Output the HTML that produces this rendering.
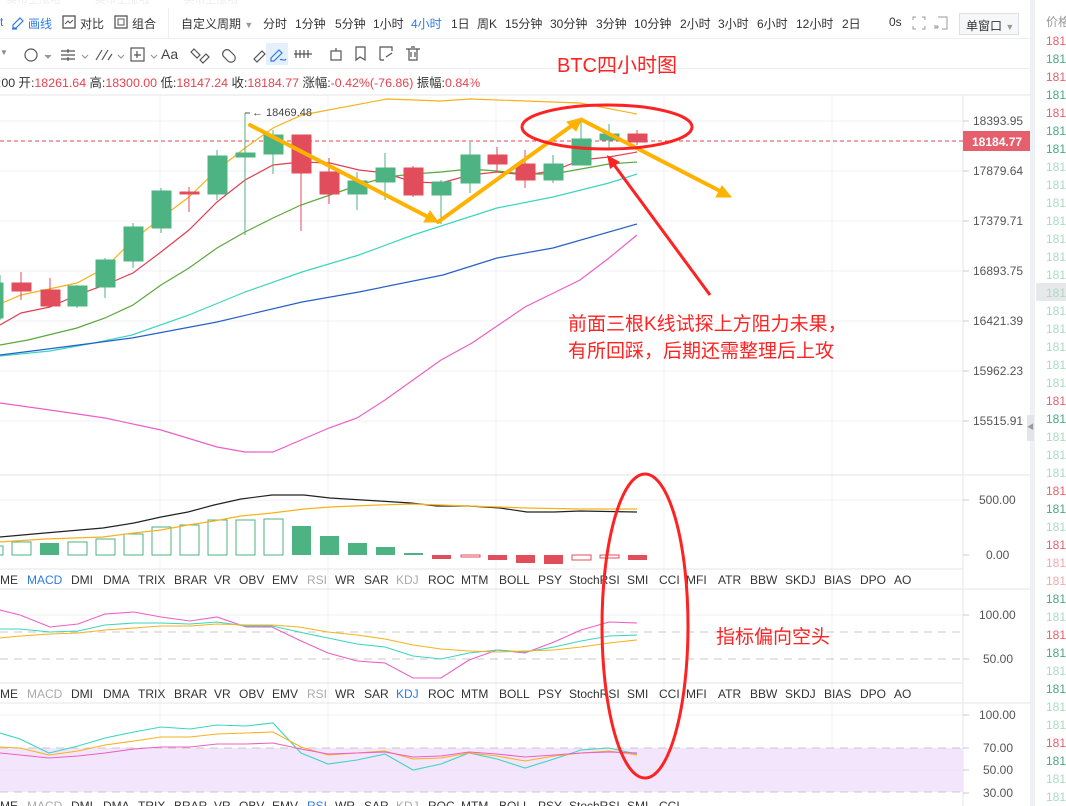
<!DOCTYPE html>
<html><head><meta charset="utf-8"><style>
*{margin:0;padding:0;box-sizing:border-box}
body{width:1066px;height:806px;overflow:hidden;background:#fff;font-family:"Liberation Sans","Noto Sans CJK SC",sans-serif;font-size:12px;color:#333;position:relative}
.a{position:absolute;white-space:nowrap}
.t{top:15px;font-size:12px;color:#333}
.r{color:#e8414f}
</style></head><body>
<div class="a" style="left:0;top:-4px;width:1030px;height:8px;color:#eee;font-size:11px;overflow:hidden;line-height:8px">&nbsp;&nbsp;买币上涨啦&nbsp;&nbsp;&nbsp;&nbsp;&nbsp;&nbsp;&nbsp;&nbsp;&nbsp;&nbsp;&nbsp;买币上涨啦&nbsp;&nbsp;&nbsp;&nbsp;&nbsp;&nbsp;&nbsp;&nbsp;&nbsp;&nbsp;&nbsp;买币上涨啦</div>
<div class="a" style="left:0;top:38px;width:1030px;height:1px;background:#eceef2"></div>
<div class="a" style="left:168px;top:8px;width:1px;height:30px;background:#eceef2"></div>
<div class="a" style="left:0;top:68px;width:1030px;height:1px;background:#eceef2"></div>
<div class="a t" style="left:0;color:#2d7be5">t</div>
<svg class="a" style="left:11px;top:16px" width="14" height="14"><path d="M2 12 L2 9 L9 2 L12 5 L5 12 Z M1 13 H6" fill="none" stroke="#2d7be5" stroke-width="1.2"/></svg>
<div class="a t" style="left:28px;color:#2d7be5">画线</div>
<svg class="a" style="left:62px;top:15px" width="14" height="14"><rect x="1" y="1" width="12" height="12" fill="none" stroke="#555" stroke-width="1.3"/><path d="M3 9 L6 6 L8 8 L11 5" fill="none" stroke="#555"/></svg>
<div class="a t" style="left:80px">对比</div>
<svg class="a" style="left:114px;top:15px" width="14" height="14"><rect x="1" y="1" width="12" height="12" fill="none" stroke="#555" stroke-width="1.3"/><rect x="4" y="4" width="6" height="6" fill="none" stroke="#555"/></svg>
<div class="a t" style="left:132px">组合</div>
<div class="a t" style="left:181px">自定义周期 <span style="color:#999;font-size:9px">▼</span></div>
<div class="a t" style="left:263px">分时</div>
<div class="a t" style="left:295px">1分钟</div>
<div class="a t" style="left:335px">5分钟</div>
<div class="a t" style="left:373px">1小时</div>
<div class="a t" style="left:411px;color:#2d7be5">4小时</div>
<div class="a t" style="left:451px">1日</div>
<div class="a t" style="left:477px">周K</div>
<div class="a t" style="left:505px">15分钟</div>
<div class="a t" style="left:550px">30分钟</div>
<div class="a t" style="left:596px">3分钟</div>
<div class="a t" style="left:634px">10分钟</div>
<div class="a t" style="left:680px">2小时</div>
<div class="a t" style="left:718px">3小时</div>
<div class="a t" style="left:757px">6小时</div>
<div class="a t" style="left:796px">12小时</div>
<div class="a t" style="left:842px">2日</div>
<div class="a t" style="left:889px">0s</div>
<svg class="a" style="left:912px;top:16px" width="14" height="14"><path d="M1 4V1H4M10 1H13V4M13 10V13H10M4 13H1V10" fill="none" stroke="#999"/></svg>
<svg class="a" style="left:934px;top:16px" width="14" height="14"><path d="M4 1H13V13H8M1 9V13M1 11H5M3 9V13" fill="none" stroke="#999"/></svg>
<div class="a" style="left:959px;top:13px;width:60px;height:22px;border:1px solid #dde0e5;background:#f6f7f9;padding:3px 0 0 6px;font-size:12px">单窗口 <span style="color:#999;font-size:9px">▼</span></div>
<div class="a" style="left:0;top:48px;color:#888;font-size:8px">▼</div>
<svg class="a" style="left:16px;top:46px" width="250" height="18" fill="none" stroke="#555" stroke-width="1.2">
<circle cx="15" cy="9" r="6"/><path d="M29 9l3 3 3-3" stroke="#999" fill="#999"/>
<path d="M45 5H59M45 9H59M45 13H59M52 3V7M52 11V15"/><path d="M66 9l3 3 3-3" stroke="#999"/>
<path d="M80 14L86 4M86 14L92 4 M92 14L96 8"/><path d="M102 9l3 3 3-3" stroke="#999"/>
<rect x="115" y="2" width="13" height="13"/><path d="M121 5V12M118 9H125"/><path d="M135 9l3 3 3-3" stroke="#999"/>
<path d="M178 3l6 6-3 3-6-6zM190 8l-6 6 3 3 6-6z"/>
<path d="M208 5a4 4 0 0 1 6 0l4 4a4 4 0 0 1-6 6l-4-4a4 4 0 0 1 0-6z"/>
<path d="M238 13l8-8 3 3-8 8z"/>
</svg>
<div class="a" style="left:161px;top:46px;font-size:14px;color:#444">Aa</div>
<div class="a" style="left:266px;top:43px;width:22px;height:22px;background:#e6f0fc"></div>
<svg class="a" style="left:268px;top:45px" width="160" height="18" fill="none" stroke="#555" stroke-width="1.2">
<path d="M3 13l8-8 3 3-8 8H3z" stroke="#2d7be5"/><path d="M12 15c2-2 4 2 6-1" stroke="#2d7be5"/>
<path d="M28 5V13M32 5V13M36 5V13M40 5V13M26 9H44"/>
<rect x="63" y="6" width="10" height="9"/><path d="M68 3V6"/>
<path d="M88 2H97V15L92 12 88 15Z"/>
<path d="M112 15V2H124V6M112 15H116M118 12l6-4"/>
<path d="M138 4H152M141 4V15H149V4M143 2H147M143 7V12M147 7V12"/>
</svg>
<div class="a" style="left:-9px;top:73px;font-size:12.4px">0:00 开:<span class="r">18261.64</span> 高:<span class="r">18300.00</span> 低:<span class="r">18147.24</span> 收:<span class="r">18184.77</span> 涨幅:<span class="r">-0.42%(-76.86)</span> 振幅:<span class="r">0.84%</span></div>
<div class="a" style="left:1030px;top:0;width:5px;height:806px;background:#eef0f3"></div>
<div class="a" style="left:1027px;top:415px;width:7px;height:26px;background:#e3e5e8;color:#999;font-size:7px;line-height:26px">◀</div>
<div class="a" style="left:1046px;top:13px;color:#999;font-size:12px">价格</div>
<div class="a" style="left:1036px;top:283px;width:30px;height:18px;background:#e6e8eb"></div>
<div class="a" style="left:1046px;top:32px;line-height:18px;font-size:12px">
<div style="color:#e8606c">181</div><div style="color:#4aa882">181</div><div style="color:#e8606c">181</div><div style="color:#4aa882">181</div><div style="color:#e8606c">181</div><div style="color:#4aa882">181</div><div style="color:#4aa882">181</div><div style="color:#a8dcc0">181</div><div style="color:#a8dcc0">181</div><div style="color:#a8dcc0">181</div><div style="color:#a8dcc0">181</div><div style="color:#a8dcc0">181</div><div style="color:#a8dcc0">181</div><div style="color:#a8dcc0">181</div><div style="color:#a8dcc0">181</div><div style="color:#a8dcc0">181</div><div style="color:#a8dcc0">181</div><div style="color:#a8dcc0">181</div><div style="color:#a8dcc0">181</div><div style="color:#a8dcc0">181</div><div style="color:#e8606c">181</div><div style="color:#4aa882">181</div><div style="color:#a8dcc0">181</div><div style="color:#a8dcc0">181</div><div style="color:#a8dcc0">181</div><div style="color:#e8606c">181</div><div style="color:#4aa882">181</div><div style="color:#a8dcc0">181</div><div style="color:#e8606c">181</div><div style="color:#f4a9ae">181</div><div style="color:#f4a9ae">181</div><div style="color:#4aa882">181</div><div style="color:#a8dcc0">181</div><div style="color:#e8606c">181</div><div style="color:#4aa882">181</div><div style="color:#a8dcc0">181</div><div style="color:#4aa882">181</div><div style="color:#a8dcc0">181</div><div style="color:#a8dcc0">181</div><div style="color:#e8606c">181</div><div style="color:#4aa882">181</div><div style="color:#a8dcc0">181</div><div style="color:#a8dcc0">181</div>
</div>
<svg class="a" style="left:0;top:0" width="1030" height="806" font-family="Liberation Sans, Noto Sans CJK SC, sans-serif">
<g stroke="#f0f1f4" stroke-width="1">
<path d="M0 121H963M0 171H963M0 221H963M0 271H963M0 321H963M0 371H963M0 421H963M0 500H963M0 615H963M0 715H963"/>
<path d="M160 95V786M328 95V786M496 95V786M664 95V786M832 95V786M470 69V95"/>
</g>
<g stroke="#e4e6ea"><path d="M0 95H1030M0 475H1030M0 569H963M0 589H1030M0 683H963M0 703H1030M0 787H963M963 95V806"/></g>
<rect x="0" y="748" width="963" height="44" fill="#f3e6fc"/>
<g stroke="#c8c8c8" stroke-dasharray="8 6"><path d="M0 632H963M0 659H963M0 748H963M0 792H963"/></g>
<path d="M0 770H963" stroke="#ece4f2"/>
<g fill="#555" font-size="12">
<path d="M963 121h6M963 171h6M963 221h6M963 271h6M963 321h6M963 371h6M963 421h6M963 500h6M963 555h6M963 615h6M963 659h6M963 715h6M963 748h6M963 770h6M963 793h6" stroke="#ccc"/>
<text x="973" y="125">18393.95</text><text x="973" y="175">17879.64</text><text x="973" y="225">17379.71</text><text x="973" y="275">16893.75</text><text x="973" y="325">16421.39</text><text x="973" y="375">15962.23</text><text x="973" y="425">15515.91</text>
<text x="979" y="504">500.00</text><text x="986" y="559">0.00</text>
<text x="979" y="619">100.00</text><text x="983" y="663">50.00</text>
<text x="979" y="719">100.00</text><text x="983" y="752">70.00</text><text x="983" y="774">50.00</text><text x="983" y="797">30.00</text>
</g>
<path d="M0 141H963" stroke="#e8414f" stroke-dasharray="4 3"/>
<rect x="963" y="131" width="67" height="20" fill="#e5606c"/>
<text x="972" y="146" fill="#fff" font-size="12" font-weight="bold">18184.77</text>
<g fill="none" stroke-width="1.2">
<polyline stroke="#f6b21b" points="0,304 21,295 77,283 105,268 133,240 161,218 189,197 217,170 245,148 273,128 302,115 387,99 441,101 470,99 580,103 637,114"/>
<polyline stroke="#e04050" points="0,325 21,313 50,307 77,295 105,285 133,273 161,252 189,230 217,202 245,180 273,165 301,162 330,163 359,170 385,173 413,182 441,183 470,175 497,172 525,175 553,171 581,160 609,157 637,152"/>
<polyline stroke="#5aa83a" points="0,345 28,340 77,328 105,318 133,305 161,285 189,268 217,248 245,232 273,218 301,205 330,195 359,185 387,177 413,174 441,172 470,169 497,171 525,174 553,174 581,169 609,164 637,162"/>
<polyline stroke="#3dd5c0" points="0,356 50,351 94,343 132,335 189,315 245,292 302,272 359,255 413,235 497,208 553,197 609,183 637,174"/>
<polyline stroke="#2660c8" points="0,355 40,350 94,343 132,338 217,322 302,302 359,292 443,275 497,258 553,248 637,224"/>
<polyline stroke="#ec5fc8" points="0,403 50,410 105,418 161,430 217,447 245,452 273,452 301,440 329,428 357,418 385,400 413,380 441,360 472,343 525,307 580,280 609,258 637,235"/>
</g>
<g stroke-width="1">
<g stroke="#4eb382" fill="#4eb382">
<path d="M0 275V320M77 285V308M105 258V298M133 223V268M161 188V233M217 150V200M245 113V235M273 130V174M357 172V210M385 153V200M441 180V224M470 142V193M553 155V183M581 120V165M609 124V150"/>
<rect x="-8" y="283" width="11" height="35"/><rect x="68" y="286" width="19" height="20"/><rect x="96" y="260" width="19" height="27"/><rect x="124" y="227" width="19" height="34"/><rect x="152" y="191" width="19" height="37"/><rect x="208" y="156" width="19" height="38"/><rect x="236" y="153" width="19" height="4"/><rect x="264" y="135" width="19" height="19"/><rect x="348" y="181" width="19" height="13"/><rect x="376" y="168" width="19" height="14"/><rect x="432" y="182" width="19" height="13"/><rect x="461" y="155" width="19" height="28"/><rect x="544" y="164" width="19" height="16"/><rect x="572" y="139" width="19" height="26"/><rect x="600" y="134" width="19" height="6"/>
</g>
<g stroke="#e14d5a" fill="#e14d5a">
<path d="M21 272V300M50 278V306M189 187V212M301 135V231M329 158V204M413 166V197M497 147V172M525 150V188M637 130V145"/>
<rect x="12" y="283" width="19" height="8"/><rect x="41" y="290" width="19" height="16"/><rect x="180" y="192" width="19" height="2"/><rect x="292" y="135" width="19" height="38"/><rect x="320" y="172" width="19" height="22"/><rect x="404" y="168" width="19" height="27"/><rect x="488" y="155" width="19" height="9"/><rect x="516" y="164" width="19" height="16"/><rect x="628" y="134" width="19" height="8"/>
</g>
</g>
<path d="M245 113H250" stroke="#555"/>
<text x="252" y="116" font-size="11" fill="#444">← 18469.48</text>
<g stroke="#4eb382" fill="none">
<rect x="-8" y="546" width="11" height="9"/><rect x="12" y="542" width="19" height="13"/><rect x="68" y="542" width="19" height="13"/><rect x="96" y="539" width="19" height="16"/><rect x="124" y="534" width="19" height="21"/><rect x="152" y="527" width="19" height="28"/><rect x="180" y="525" width="19" height="30"/><rect x="208" y="520" width="19" height="35"/><rect x="236" y="520" width="19" height="35"/><rect x="264" y="519" width="19" height="36"/>
</g>
<g fill="#4eb382"><rect x="40" y="543" width="19" height="12"/><rect x="292" y="526" width="19" height="29"/><rect x="320" y="536" width="19" height="19"/><rect x="348" y="543" width="19" height="12"/><rect x="376" y="547" width="19" height="8"/><rect x="404" y="553" width="19" height="2"/></g>
<g fill="#e14d5a"><rect x="432" y="555" width="19" height="4"/><rect x="488" y="555" width="19" height="5"/><rect x="516" y="555" width="19" height="8"/><rect x="544" y="555" width="19" height="9"/><rect x="628" y="555" width="19" height="5"/></g>
<g fill="none" stroke="#e14d5a"><rect x="461" y="555" width="19" height="2"/><rect x="572" y="555" width="19" height="5"/><rect x="600" y="555" width="19" height="3"/></g>
<g fill="none" stroke-width="1.2">
<polyline stroke="#222" points="0,537 45,533 103,528 134,523 161,517 188,512 214,505 241,499 272,495 304,495 330,498 379,501 411,503 437,506 469,506 500,508 527,512 554,512 580,511 637,512"/>
<polyline stroke="#f6b21b" points="0,542 45,539 103,537 134,533 161,530 188,525 214,521 241,516 272,513 304,509 330,507 379,505 411,504 469,506 527,508 580,509 637,509"/>
</g>
<g fill="none" stroke-width="1.1">
<polyline stroke="#ec5fc8" points="0,610 20,615 50,627 78,624 105,614 134,612 161,617 190,621 217,617 246,627 272,627 299,640 328,653 357,661 385,663 413,678 441,678 469,660 497,650 525,653 554,642 581,630 609,622 637,623"/>
<polyline stroke="#3dd5c0" points="0,629 20,629 50,632 78,631 105,625 134,623 161,623 190,624 217,622 246,626 272,626 299,632 328,638 357,644 385,647 413,656 441,659 469,653 497,650 525,652 554,647 581,641 609,636 637,635"/>
<polyline stroke="#f6b21b" points="0,638 20,636 50,634 78,633 105,630 134,628 161,626 190,626 217,624 246,625 272,625 299,627 328,632 357,635 385,639 413,645 441,649 469,651 497,652 525,651 554,650 581,647 609,643 637,640"/>
</g>
<g fill="none" stroke-width="1.1">
<polyline stroke="#3dd5c0" points="0,733 20,739 49,753 78,746 105,738 134,732 161,727 190,729 217,725 246,726 273,723 301,753 328,764 357,760 385,754 413,770 441,764 469,753 497,759 525,768 554,759 581,750 609,748 637,754"/>
<polyline stroke="#f6b21b" points="0,747 20,748 49,755 78,751 105,745 134,741 161,737 190,737 217,734 246,733 273,732 301,747 328,755 357,753 385,751 413,759 441,758 469,753 497,756 525,761 554,756 581,753 609,751 637,755"/>
<polyline stroke="#ec5fc8" points="0,753 20,755 49,758 78,756 105,753 134,749 161,747 190,747 217,744 246,744 273,743 301,749 328,754 357,753 385,752 413,757 441,756 469,752 497,754 525,757 554,755 581,753 609,752 637,753"/>
</g>
<g font-size="12" fill="#333">
<text y="584"><tspan x="0">ME</tspan><tspan x="27" fill="#2d7be5">MACD</tspan><tspan x="71">DMI</tspan><tspan x="103">DMA</tspan><tspan x="138">TRIX</tspan><tspan x="174">BRAR</tspan><tspan x="214">VR</tspan><tspan x="239">OBV</tspan><tspan x="272">EMV</tspan><tspan x="307" fill="#aaa">RSI</tspan><tspan x="335">WR</tspan><tspan x="364">SAR</tspan><tspan x="396" fill="#aaa">KDJ</tspan><tspan x="428">ROC</tspan><tspan x="461">MTM</tspan><tspan x="499">BOLL</tspan><tspan x="538">PSY</tspan><tspan x="569">StochRSI</tspan><tspan x="627">SMI</tspan><tspan x="659">CCI</tspan><tspan x="686">MFI</tspan><tspan x="718">ATR</tspan><tspan x="750">BBW</tspan><tspan x="785">SKDJ</tspan><tspan x="824">BIAS</tspan><tspan x="860">DPO</tspan><tspan x="894">AO</tspan></text>
<text y="698"><tspan x="0">ME</tspan><tspan x="27" fill="#aaa">MACD</tspan><tspan x="71">DMI</tspan><tspan x="103">DMA</tspan><tspan x="138">TRIX</tspan><tspan x="174">BRAR</tspan><tspan x="214">VR</tspan><tspan x="239">OBV</tspan><tspan x="272">EMV</tspan><tspan x="307" fill="#aaa">RSI</tspan><tspan x="335">WR</tspan><tspan x="364">SAR</tspan><tspan x="396" fill="#2d7be5">KDJ</tspan><tspan x="428">ROC</tspan><tspan x="461">MTM</tspan><tspan x="499">BOLL</tspan><tspan x="538">PSY</tspan><tspan x="569">StochRSI</tspan><tspan x="627">SMI</tspan><tspan x="659">CCI</tspan><tspan x="686">MFI</tspan><tspan x="718">ATR</tspan><tspan x="750">BBW</tspan><tspan x="785">SKDJ</tspan><tspan x="824">BIAS</tspan><tspan x="860">DPO</tspan><tspan x="894">AO</tspan></text>
<text y="810"><tspan x="0">ME</tspan><tspan x="27" fill="#aaa">MACD</tspan><tspan x="71">DMI</tspan><tspan x="103">DMA</tspan><tspan x="138">TRIX</tspan><tspan x="174">BRAR</tspan><tspan x="214">VR</tspan><tspan x="239">OBV</tspan><tspan x="272">EMV</tspan><tspan x="307" fill="#2d7be5">RSI</tspan><tspan x="335">WR</tspan><tspan x="364">SAR</tspan><tspan x="396" fill="#aaa">KDJ</tspan><tspan x="428">ROC</tspan><tspan x="461">MTM</tspan><tspan x="499">BOLL</tspan><tspan x="538">PSY</tspan><tspan x="569">StochRSI</tspan><tspan x="627">SMI</tspan><tspan x="659">CCI</tspan></text>
</g>
<g stroke="#ffb300" fill="#ffb300" stroke-linecap="round">
<path d="M250 125L432 219" stroke-width="4" fill="none"/>
<path d="M438 222L424 222 430 211Z"/>
<path d="M438 222L574 124" stroke-width="4" fill="none"/>
<path d="M582 118L576 131 567 122Z"/>
<path d="M582 120L722 192" stroke-width="4" fill="none"/>
<path d="M731 197L716 197 722 186Z"/>
</g>
<ellipse cx="607" cy="127" rx="85" ry="22" fill="none" stroke="#f22" stroke-width="3"/>
<path d="M710 295L612 162" stroke="#f22" stroke-width="3"/>
<path d="M607 155L620 162 610 169Z" fill="#f22"/>
<ellipse cx="645" cy="626" rx="43" ry="152" fill="none" stroke="#f22" stroke-width="3"/>
<g fill="#f22" font-size="19">
<text x="557" y="72" font-size="20">BTC四小时图</text>
<text x="568" y="330">前面三根K线试探上方阻力未果，</text>
<text x="568" y="357">有所回踩，后期还需整理后上攻</text>
<text x="716" y="643">指标偏向空头</text>
</g>
</svg>
</body></html>
